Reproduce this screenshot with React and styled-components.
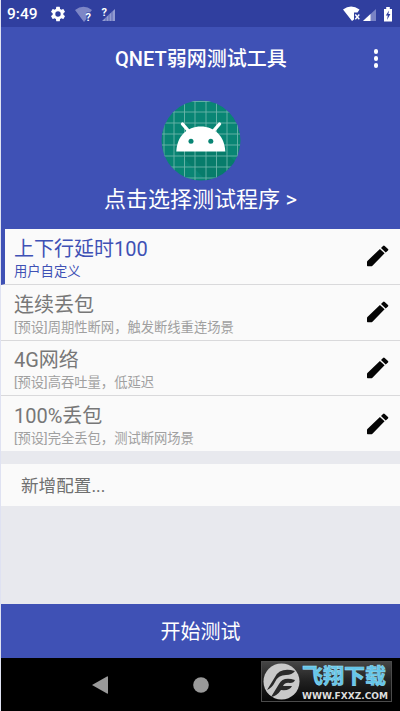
import React from "react";
import styled, { createGlobalStyle } from "styled-components";

const presets = [
  { name: "上下行延时100", info: "用户自定义", active: true },
  { name: "连续丢包", info: "[预设]周期性断网，触发断线重连场景" },
  { name: "4G网络", info: "[预设]高吞吐量，低延迟" },
  { name: "100%丢包", info: "[预设]完全丢包，测试断网场景" },
];

const columns = [3, 13, 23.5, 34, 45, 55.5, 66, 76.5];
const rows = [1.5, 12, 23, 34, 45, 56, 67, 78];

const GearIcon = () => (
  <svg width="18" height="18" viewBox="0 0 24 24" fill="#fff">
    <path d="M19.14 12.94c.04-.3.06-.61.06-.94s-.02-.64-.07-.94l2.03-1.58a.49.49 0 0 0 .12-.61l-1.92-3.32a.49.49 0 0 0-.59-.22l-2.39.96a7 7 0 0 0-1.62-.94l-.36-2.54a.48.48 0 0 0-.48-.41h-3.84a.48.48 0 0 0-.47.41l-.36 2.54c-.59.24-1.13.57-1.62.94l-2.39-.96a.48.48 0 0 0-.59.22L2.74 8.87a.48.48 0 0 0 .12.61l2.03 1.58a7 7 0 0 0 0 1.88l-2.03 1.58a.49.49 0 0 0-.12.61l1.92 3.32c.12.22.37.29.59.22l2.39-.96c.5.38 1.03.7 1.62.94l.36 2.54c.05.24.24.41.48.41h3.84c.24 0 .44-.17.47-.41l.36-2.54a7 7 0 0 0 1.62-.94l2.39.96c.22.08.47 0 .59-.22l1.92-3.32a.48.48 0 0 0-.12-.61zM12 15.6a3.6 3.6 0 1 1 0-7.2 3.6 3.6 0 0 1 0 7.2z" />
  </svg>
);

const PencilIcon = () => (
  <svg width="22" height="22" viewBox="0 0 22 22">
    <path
      d="M0 17Q0 16.500.4 16L12.900 3.900l4.700 4.400L5.200 20.900Q4.700 21.300 4 21.300H.7Q0 21.300 0 20.600zM14 2.900l2-2q.9-.8 1.700 0l3.300 3.100q.7.7 0 1.400l-2.300 2.100z"
      fill="#050505"
    />
  </svg>
);

const RobotLogo = () => (
  <svg width="80" height="81" viewBox="0 0 80 81">
    <defs>
      <clipPath id="disc">
        <ellipse cx="40" cy="40.5" rx="39.5" ry="40" />
      </clipPath>
    </defs>
    <g clipPath="url(#disc)">
      <rect width="80" height="81" fill="#098574" />
      <path d="M16 51.5 46 81H80V67L64 51.5z" fill="#00584d" opacity="0.2" />
      {columns.map((x) => (
        <path key={x} d={`M${x} 0V81`} stroke="#6cb4a9" strokeWidth="0.9" />
      ))}
      {rows.map((y) => (
        <path key={y} d={`M0 ${y}H80`} stroke="#6cb4a9" strokeWidth="0.9" />
      ))}
    </g>
    <path d="M15.3 51.5C16 36 26 26.500 39.800 26.500S63.500 36 64.300 51.500z" fill="#fff" />
    <path
      d="m21.500 24 6.500 7.500M58.500 24l-6.500 7.500"
      stroke="#fff"
      strokeWidth="3.4"
      strokeLinecap="round"
    />
    <circle cx="30" cy="41.200" r="2.500" fill="#098574" />
    <circle cx="49.800" cy="41.200" r="2.500" fill="#098574" />
  </svg>
);

const App = () => {
  return (
    <>
      <GlobalStyle />
      <Screen>
        <StatusBar>
          <Clock>9:49</Clock>
          <GearIcon />
          <LeftSignals width="42" height="18" viewBox="0 0 42 18">
            <path d="M0 5Q8.500-1.500 17 5L15 7.500H11.500V14L9 17z" fill="#7d86c6" />
            <text x="10.500" y="16">?</text>
            <path d="M40 4V16H27z" fill="#929bd1" />
            <path d="M31 12v4M34 9v7M37 6v10" stroke="#4250a7" strokeWidth="0.7" />
            <text x="26.500" y="11">?</text>
          </LeftSignals>
          <Spacer />
          <svg width="52" height="18" viewBox="0 0 52 18">
            <path d="M1 4.500Q9-1.700 17.500 4.500L15.500 7.500H12V14.500L10 16z" fill="#fff" />
            <path d="m13.300 9.500 4 4.700m0-4.700-4 4.700" stroke="#fff" strokeWidth="1.400" />
            <path d="M34 4V16H21z" fill="#7983c5" />
            <path d="M28.500 9V16H21z" fill="#fff" />
            <path d="M42 4h2.200V2h3.600v2H50v12.500h-8z" fill="#fff" />
            <path d="m47 5.500-3.200 5h2l-.8 4.500 3.400-6h-2z" fill="#303f9f" />
          </svg>
        </StatusBar>
        <AppBar>
          <Title>QNET弱网测试工具</Title>
          <MenuButton>
            <Dot />
            <Dot />
            <Dot />
          </MenuButton>
        </AppBar>
        <Hero>
          <RobotLogo />
          <PickText>点击选择测试程序 &gt;</PickText>
        </Hero>
        <PresetList>
          {presets.map((preset) => (
            <Row key={preset.name} $active={preset.active}>
              <RowText>
                <Name>{preset.name}</Name>
                <Info $active={preset.active}>{preset.info}</Info>
              </RowText>
              <PencilIcon />
            </Row>
          ))}
        </PresetList>
        <AddRow>新增配置...</AddRow>
        <Spacer />
        <StartButton>开始测试</StartButton>
        <NavBar>
          <svg width="120" height="20" viewBox="0 0 120 20">
            <path d="M0 10 15 1.500Q16 1 16 2.200V18Q16 19.200 15 18.500z" fill="#999" />
            <circle cx="109" cy="10" r="7.800" fill="#999" />
          </svg>
          <Watermark>
            <svg width="37" height="37" viewBox="0 0 37 37">
              <circle cx="18.500" cy="18.500" r="18" fill="#c9c9c9" />
              <path
                d="M32 8Q17 4 12 14L4 27Q9 25 12 19Q15 12 23 12Q29 12 32 8zM32 17Q20 13 16 21L8 34Q14 33 18 27Q27 28 29 23H20Q22 19 27 20Q31 20 32 17z"
                fill="#292929"
              />
            </svg>
            <Brand>
              <BrandName>飞翔下载</BrandName>
              <BrandUrl width="90" height="9" viewBox="0 0 90 9">
                <text x="0" y="8" textLength="86" lengthAdjust="spacingAndGlyphs">
                  WWW.FXXZ.COM
                </text>
              </BrandUrl>
            </Brand>
          </Watermark>
        </NavBar>
      </Screen>
    </>
  );
};

const GlobalStyle = createGlobalStyle`
  * {
    box-sizing: border-box;
  }

  body {
    margin: 0;
    font-family: Roboto, "Noto Sans CJK SC", sans-serif;
  }

  svg {
    display: block;
    flex-shrink: 0;
  }
`;

const Screen = styled.main`
  display: flex;
  flex-direction: column;
  width: 400px;
  height: 711px;
  overflow: hidden;
  border-left: 1px solid #dfe2f2;
  background: #e8e9ee;
`;

const StatusBar = styled.header`
  display: flex;
  align-items: center;
  height: 27px;
  padding: 0 6px 0 6px;
  background: #303f9f;
`;

const Clock = styled.span`
  width: 42px;
  padding-top: 2px;
  color: #fff;
  font-size: 15.5px;
  font-weight: 500;
  line-height: 25px;
`;

const LeftSignals = styled.svg`
  margin-left: 8px;
  overflow: visible;

  text {
    fill: #fff;
    font-size: 11px;
    font-weight: 700;
  }
`;

const Spacer = styled.div`
  flex: 1;
`;

const AppBar = styled.div`
  display: flex;
  align-items: center;
  justify-content: flex-end;
  height: 63px;
  padding-right: 20px;
  background: #3f51b5;
`;

const Title = styled.h1`
  width: 172px;
  margin: 0 85px 0 0;
  color: #fff;
  font-size: 20px;
  font-weight: 500;
  line-height: 30px;
  white-space: nowrap;
`;

const MenuButton = styled.div`
  display: flex;
  flex-direction: column;
  gap: 2.5px;
  width: 8px;
  align-items: center;
`;

const Dot = styled.span`
  width: 4.5px;
  height: 4.5px;
  border-radius: 50%;
  background: #fff;
`;

const Hero = styled.section`
  display: flex;
  flex-direction: column;
  align-items: center;
  height: 139px;
  padding-top: 10px;
  background: #3f51b5;
`;

const PickText = styled.div`
  margin-top: 2px;
  color: #fff;
  font-size: 22px;
  line-height: 34px;
  white-space: nowrap;
`;

const PresetList = styled.div`
  display: flex;
  flex-direction: column;
  height: 222px;
`;

const Row = styled.div`
  display: flex;
  flex: 1;
  align-items: center;
  justify-content: space-between;
  padding: 0 11px 0 ${(props) => (props.$active ? "9px" : "13px")};
  border-left: ${(props) => (props.$active ? "4px solid #3f51b5" : "0")};
  border-bottom: 1px solid #d9d9db;
  background: #fafafa;
  color: ${(props) => (props.$active ? "#3f51b5" : "#777")};

  &:last-child {
    border-bottom: 0;
  }
`;

const RowText = styled.div`
  display: flex;
  flex-direction: column;
  padding-top: 5px;
`;

const Name = styled.div`
  font-size: 20px;
  line-height: 25px;
`;

const Info = styled.div`
  color: ${(props) => (props.$active ? "#3f51b5" : "#a0a0a0")};
  font-size: 13.3px;
  line-height: 19px;
`;

const AddRow = styled.div`
  height: 42px;
  margin-top: 13px;
  padding: 1px 0 0 20px;
  background: #fafafa;
  color: #707070;
  font-size: 17.6px;
  line-height: 42px;
`;

const StartButton = styled.div`
  height: 54px;
  padding-top: 2px;
  background: #3f51b5;
  color: #fff;
  font-size: 20px;
  line-height: 52px;
  text-align: center;
`;

const NavBar = styled.footer`
  position: relative;
  height: 53px;
  padding: 17px 0 0 91px;
  background: #000;
`;

const Watermark = styled.div`
  position: absolute;
  top: 3px;
  left: 260px;
  display: flex;
  align-items: center;
  gap: 2px;
  width: 131px;
  height: 41px;
  padding-left: 1px;
  border: 1px solid #4b4b4b;
  background: linear-gradient(#454545, #202020 50%, #070707);
`;

const Brand = styled.div`
  display: flex;
  flex-direction: column;
  gap: 1px;
`;

const BrandName = styled.div`
  color: #65c5e9;
  font-size: 21px;
  font-weight: 900;
  line-height: 27px;
  white-space: nowrap;
  -webkit-text-stroke: 0.4px #a5e2f6;
`;

const BrandUrl = styled.svg`
  overflow: visible;

  text {
    fill: #ddd;
    font-family: "DejaVu Sans", sans-serif;
    font-size: 9px;
    font-weight: 700;
  }
`;

export default App;
